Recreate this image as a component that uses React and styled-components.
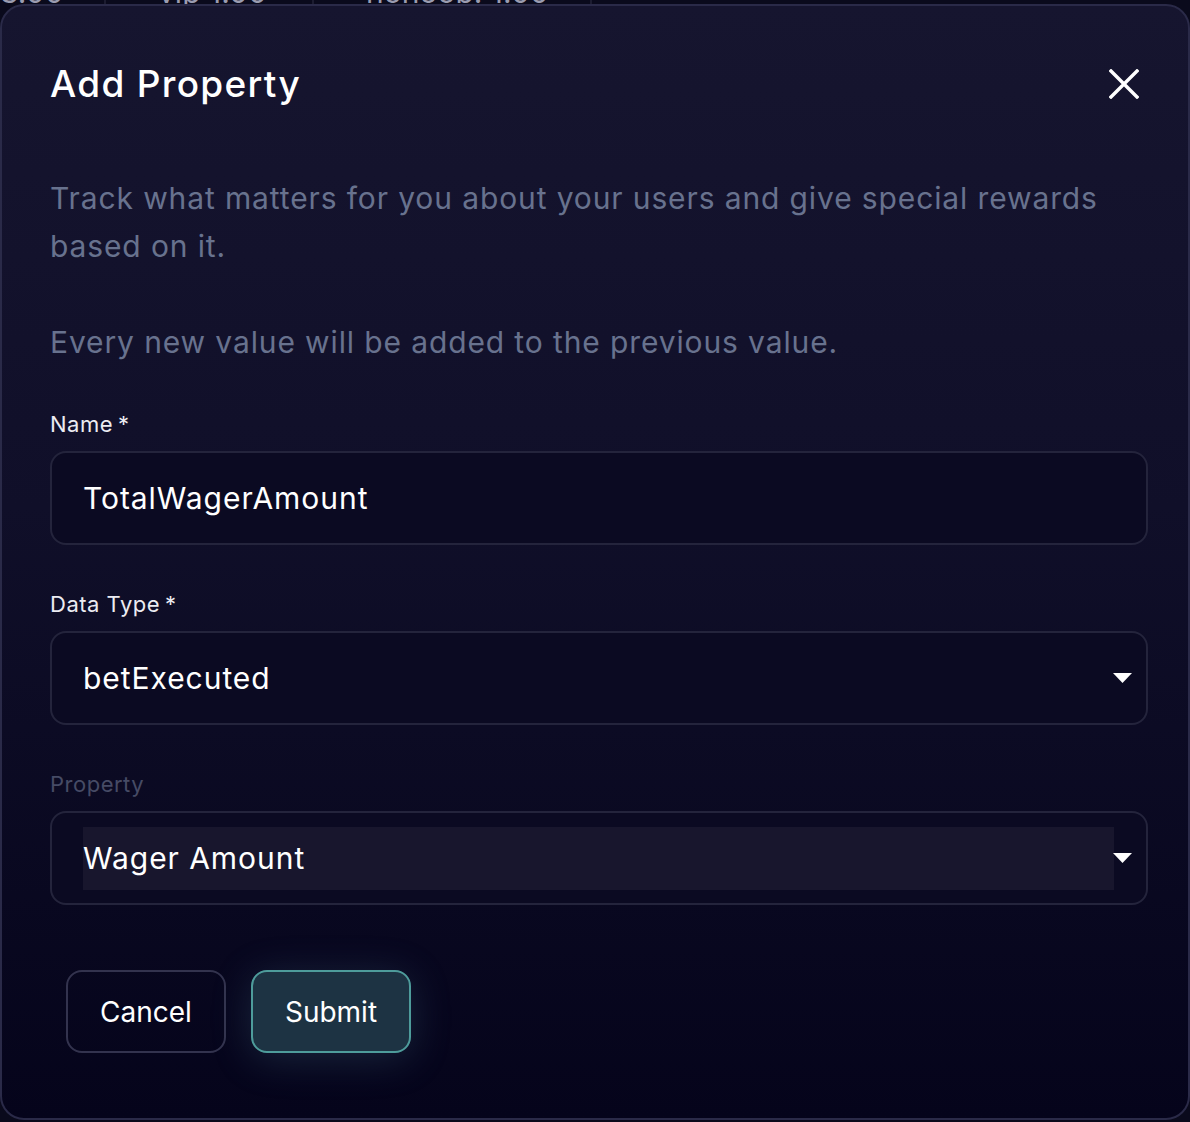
import React from 'react'
import styled, { createGlobalStyle } from 'styled-components'

const GlobalStyle = createGlobalStyle`
  body {
    margin: 0;
    background: #0a0a1c;
    font-family: Inter, "Noto Sans", sans-serif;
  }
`

const Page = styled.div`
  position: relative;
  width: 1190px;
  height: 1122px;
  overflow: hidden;
  background: #0a0a1c;
`

// table of the page behind the dialog, only its lower edge shows
const BehindRow = styled.div`
  display: flex;
  margin-top: -20px;
  height: 24px;
`

const BehindCell = styled.div`
  width: ${({ w }) => w}px;
  padding-left: ${({ pl }) => pl}px;
  box-sizing: border-box;
  border-right: 2px solid #1c1c30;
  color: #9a9cb0;
  font-size: 30px;
  line-height: 24px;
  white-space: nowrap;
`

const Modal = styled.div`
  position: absolute;
  top: 4px;
  left: 0;
  width: 1190px;
  height: 1116px;
  box-sizing: border-box;
  border: 2px solid #2a2a48;
  border-radius: 24px;
  background: linear-gradient(180deg, #16152f 0%, #100f29 45%, #05041b 100%);
  padding: 56px 40px 0 48px;
`

const Header = styled.div`
  display: flex;
  align-items: center;
  justify-content: space-between;
  height: 44px;
  padding-right: 8px;
`

const Title = styled.h2`
  margin: 0;
  font-size: 37px;
  font-weight: 500;
  color: #ffffff;
  line-height: 44px;
  letter-spacing: 1.3px;
`

const CloseButton = styled.button`
  background: none;
  border: none;
  padding: 0;
  width: 32px;
  height: 32px;
  display: flex;
  align-items: center;
  justify-content: center;
  cursor: pointer;
`

const Description = styled.p`
  margin: ${({ first }) => (first ? '68px' : '48px')} 0 0;
  font-size: 30px;
  line-height: 48px;
  color: #68728e;
  letter-spacing: 0.88px;
`

const Field = styled.div`
  margin-top: ${({ first }) => (first ? '44px' : '45px')};
`

const Label = styled.label`
  display: block;
  font-size: 22px;
  line-height: 28px;
  letter-spacing: 0.5px;
  color: ${({ disabled }) => (disabled ? '#464b65' : '#ececf2')};
  margin-bottom: 13px;
`

const Req = styled.span`
  margin-left: 5px;
`

const Box = styled.div`
  position: relative;
  display: flex;
  align-items: center;
  height: 94px;
  box-sizing: border-box;
  border: 2px solid #24243c;
  border-radius: 16px;
  background: #0b0a22;
  padding: 0 32px 0 31px;
`

const Value = styled.div`
  flex: 1;
  display: flex;
  align-items: center;
  height: 63px;
  font-size: 30px;
  color: #ffffff;
  letter-spacing: 0.95px;
  background: ${({ highlighted }) => (highlighted ? '#18162d' : 'transparent')};
`

const Caret = styled.svg`
  position: absolute;
  right: 14px;
  top: 50%;
  margin-top: -5px;
`

const Actions = styled.div`
  display: flex;
  gap: 25px;
  margin-top: 65px;
  padding-left: 16px;
`

const Button = styled.button`
  width: 160px;
  height: 83px;
  box-sizing: border-box;
  border-radius: 16px;
  font-family: Inter, "Noto Sans", sans-serif;
  font-size: 28px;
  color: #ffffff;
  cursor: pointer;
  border: 2px solid ${({ primary }) => (primary ? '#4e9c9b' : '#33334e')};
  background: ${({ primary }) => (primary ? '#1d3343' : 'transparent')};
  box-shadow: ${({ primary }) =>
    primary ? '0 6px 40px rgba(90, 150, 175, 0.22)' : 'none'};
`

const Select = ({ value, highlighted }) => (
  <Box>
    <Value highlighted={highlighted}>{value}</Value>
    <Caret width="19" height="10" viewBox="0 0 19 10">
      <polygon points="0,0 19,0 9.5,10" fill="#ffffff" />
    </Caret>
  </Box>
)

const App = () => {
  return (
    <Page>
      <GlobalStyle />
      <BehindRow>
        <BehindCell w={106} pl={0}>3.00</BehindCell>
        <BehindCell w={208} pl={52}>vip 1.00</BehindCell>
        <BehindCell w={278} pl={52}>nonoob: 1.00</BehindCell>
      </BehindRow>
      <Modal>
        <Header>
          <Title>Add Property</Title>
          <CloseButton aria-label="Close">
            <svg width="30" height="30" viewBox="0 0 30 30">
              <path d="M2 2 L28 28 M28 2 L2 28" stroke="#ffffff" strokeWidth="3.4" strokeLinecap="square" />
            </svg>
          </CloseButton>
        </Header>
        <Description first>
          Track what matters for you about your users and give special rewards based on it.
        </Description>
        <Description>Every new value will be added to the previous value.</Description>

        <Field first>
          <Label>Name<Req>*</Req></Label>
          <Box>
            <Value>TotalWagerAmount</Value>
          </Box>
        </Field>

        <Field>
          <Label>Data Type<Req>*</Req></Label>
          <Select value="betExecuted" />
        </Field>

        <Field>
          <Label disabled>Property</Label>
          <Select value="Wager Amount" highlighted />
        </Field>

        <Actions>
          <Button>Cancel</Button>
          <Button primary>Submit</Button>
        </Actions>
      </Modal>
    </Page>
  )
}

export default App
